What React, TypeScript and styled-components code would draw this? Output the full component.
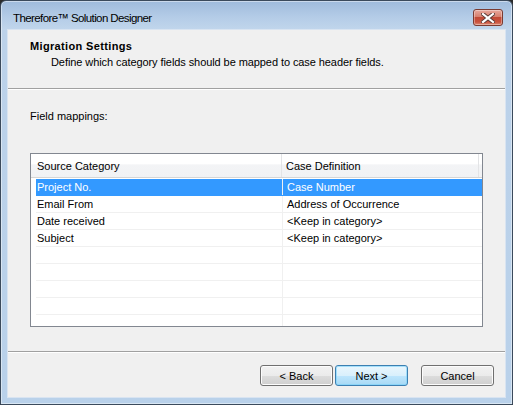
import * as React from "react";
import styled, { createGlobalStyle, css } from "styled-components";

const GlobalStyle = createGlobalStyle`
  html, body {
    margin: 0;
    padding: 0;
    background: #2b2b2b;
  }
  body {
    font-family: "Liberation Sans", Arial, sans-serif;
    font-size: 11px;
    color: #000;
  }
`;

const mappings = [
  { source: "Project No.", target: "Case Number" },
  { source: "Email From", target: "Address of Occurrence" },
  { source: "Date received", target: "<Keep in category>" },
  { source: "Subject", target: "<Keep in category>" },
];

const EMPTY_ROWS = 5;

export default function App() {
  const [selected, setSelected] = React.useState(0);
  const rows = [
    ...mappings,
    ...Array.from({ length: EMPTY_ROWS }, () => ({ source: "", target: "" })),
  ];

  return (
    <>
      <GlobalStyle />
      <Window>
        <TitleBar>
          <Title>Therefore™ Solution Designer</Title>
          <CloseButton aria-label="Close">
            <svg width="14" height="10" viewBox="0 0 14 10">
              <path
                d="M2 1 L12 9 M12 1 L2 9"
                stroke="#5a3a36"
                strokeWidth="4"
                strokeLinecap="square"
              />
              <path
                d="M2 1 L12 9 M12 1 L2 9"
                stroke="#ffffff"
                strokeWidth="2.2"
                strokeLinecap="square"
              />
            </svg>
          </CloseButton>
        </TitleBar>
        <Client>
          <Header>
            <HeaderTitle>Migration Settings</HeaderTitle>
            <HeaderSub>
              Define which category fields should be mapped to case header
              fields.
            </HeaderSub>
          </Header>
          <Separator />
          <Body>
            <Label>Field mappings:</Label>
            <ListBox>
              <ListHeader>
                <HeaderCell $width={251}>Source Category</HeaderCell>
                <HeaderCell $width={197} $second>
                  Case Definition
                </HeaderCell>
              </ListHeader>
              <Rows>
                {rows.map((row, i) => (
                  <Row
                    key={i}
                    $selected={i === selected}
                    onClick={() => row.source && setSelected(i)}
                  >
                    <Cell>{row.source}</Cell>
                    <Cell $second>{row.target}</Cell>
                  </Row>
                ))}
              </Rows>
            </ListBox>
          </Body>
          <Separator />
          <Footer>
            <Button>&lt; Back</Button>
            <Button $default>Next &gt;</Button>
            <Button $spaced>Cancel</Button>
          </Footer>
        </Client>
      </Window>
    </>
  );
}

const Window = styled.div`
  width: 513px;
  height: 405px;
  box-sizing: border-box;
  border: 1px solid #3b4a5c;
  border-radius: 6px 6px 0 0;
  background: linear-gradient(
    to bottom,
    #9fbbdc 0px,
    #b4cce7 16px,
    #c1d6ec 29px,
    #bcd2ea 29px,
    #b9d1ea 100%
  );
  display: flex;
  flex-direction: column;
  padding: 0 7px 7px 7px;
  box-shadow: inset 0 0 0 1px rgba(255, 255, 255, 0.45);
`;

const TitleBar = styled.div`
  height: 29px;
  display: flex;
  align-items: flex-start;
  justify-content: space-between;
  flex-shrink: 0;
`;

const Title = styled.div`
  font-family: "Liberation Sans", Arial, sans-serif;
  font-size: 11.5px;
  line-height: 15px;
  letter-spacing: -0.6px;
  padding: 10px 0 0 5px;
  color: #000;
`;

const CloseButton = styled.button`
  margin-top: 8px;
  margin-right: 2px;
  width: 30px;
  height: 17px;
  padding: 0;
  box-sizing: border-box;
  border: 1px solid #7a3b32;
  border-radius: 3px;
  background: linear-gradient(
    to bottom,
    #e8a89c 0%,
    #d7806f 45%,
    #c24a36 50%,
    #c9523e 80%,
    #dc8b74 100%
  );
  box-shadow: inset 0 0 0 1px rgba(255, 255, 255, 0.35);
  display: flex;
  align-items: center;
  justify-content: center;
`;

const Client = styled.div`
  flex: 1;
  background: #f0f0f0;
  display: flex;
  flex-direction: column;
  box-shadow: 0 0 0 1px #d9e4f1;
`;

const Header = styled.div`
  height: 58px;
  box-sizing: border-box;
  padding: 10px 0 0 22px;
`;

const HeaderTitle = styled.div`
  font-weight: bold;
  line-height: 13px;
  letter-spacing: 0.35px;
`;

const HeaderSub = styled.div`
  line-height: 13px;
  margin-top: 3px;
  padding-left: 21px;
  letter-spacing: -0.08px;
`;

const Separator = styled.div`
  height: 1px;
  background: #a0a0a0;
  border-bottom: 1px solid #ffffff;
  flex-shrink: 0;
`;

const Body = styled.div`
  flex: 1;
  padding: 20px 22px 0 22px;
  display: flex;
  flex-direction: column;
`;

const Label = styled.div`
  line-height: 13px;
  margin-bottom: 30px;
`;

const ListBox = styled.div`
  width: 453px;
  height: 174px;
  box-sizing: border-box;
  border: 1px solid #828790;
  background: #ffffff;
  overflow: hidden;
  display: flex;
  flex-direction: column;
`;

const ListHeader = styled.div`
  height: 24px;
  box-sizing: border-box;
  display: flex;
  background: linear-gradient(
    to bottom,
    #ffffff 0%,
    #ffffff 45%,
    #f3f4f6 46%,
    #f1f2f4 100%
  );
  border-bottom: 1px solid #d5d5d5;
  flex-shrink: 0;
`;

const HeaderCell = styled.div<{ $width: number; $second?: boolean }>`
  width: ${(p) => p.$width}px;
  box-sizing: border-box;
  border-right: 1px solid #e3e4e6;
  padding: 2px 0 0 ${(p) => (p.$second ? 4 : 6)}px;
  line-height: 21px;
  color: #000;
  white-space: nowrap;
`;

const Rows = styled.div`
  padding: 1px 0 0 5px;
`;

const Row = styled.div<{ $selected?: boolean }>`
  display: grid;
  grid-template-columns: 246px 1fr;
  height: 17px;
  box-sizing: border-box;
  border-bottom: 1px solid #f0f0f0;
  line-height: 17px;
  ${(p) =>
    p.$selected &&
    css`
      background: #3399ff;
      color: #ffffff;
      border-bottom-color: #3399ff;
    `}
`;

const Cell = styled.div<{ $second?: boolean }>`
  padding-left: ${(p) => (p.$second ? 4 : 1)}px;
  border-left: ${(p) => (p.$second ? "1px solid #f0f0f0" : "none")};
  white-space: nowrap;
  overflow: hidden;
`;

const Footer = styled.div`
  height: 44px;
  box-sizing: border-box;
  display: flex;
  justify-content: flex-end;
  align-items: flex-start;
  padding: 12px 11px 0 0;
  gap: 2px;
`;

const Button = styled.button<{ $default?: boolean; $spaced?: boolean }>`
  width: 73px;
  height: 21px;
  box-sizing: border-box;
  margin-left: ${(p) => (p.$spaced ? 11 : 0)}px;
  padding: 0;
  font-family: "Liberation Sans", Arial, sans-serif;
  font-size: 11px;
  color: #000;
  border: 1px solid ${(p) => (p.$default ? "#3c7fb1" : "#707070")};
  border-radius: 3px;
  background: linear-gradient(
    to bottom,
    #f2f2f2 0%,
    #ebebeb 50%,
    #dddddd 51%,
    #cfcfcf 100%
  );
  box-shadow: inset 0 0 0 1px ${(p) => (p.$default ? "#48d8fb" : "#fcfcfc")};
  ${(p) =>
    p.$default &&
    css`
      background: linear-gradient(
        to bottom,
        #eaf6fd 0%,
        #d9f0fc 50%,
        #bee6fd 51%,
        #a7d9f5 100%
      );
      box-shadow: inset 0 0 0 1px rgba(120, 210, 250, 0.6);
    `}
`;
